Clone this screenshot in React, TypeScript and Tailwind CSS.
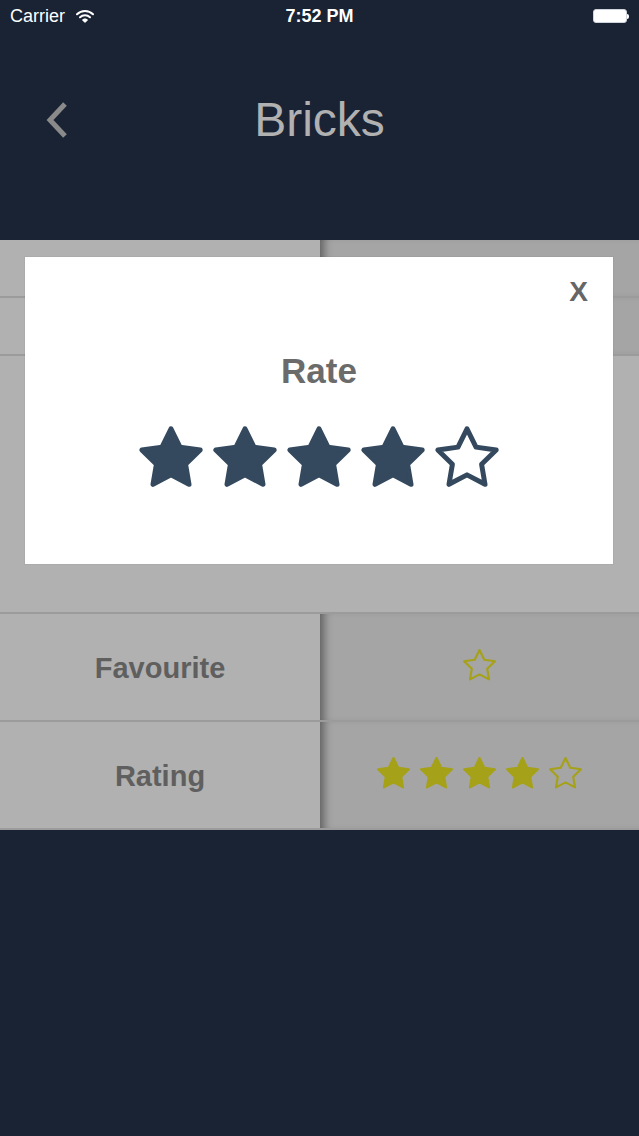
// Rating modal over a detail table, iOS style.

const STAR = "12,2 15.09,8.26 22,9.27 17,14.14 18.18,21.02 12,17.77 5.82,21.02 7,14.14 2,9.27 8.91,8.26";

function Star({
  size,
  color,
  filled,
  stroke,
}: {
  size: number;
  color: string;
  filled: boolean;
  stroke: number;
}) {
  return (
    <svg width={size} height={size} viewBox="0 0 24 24" className="shrink-0">
      <polygon
        points={STAR}
        fill={filled ? color : "none"}
        stroke={color}
        strokeWidth={stroke}
        strokeLinejoin="round"
      />
    </svg>
  );
}

function StatusBar() {
  return (
    <div className="relative flex h-8 items-center px-[10px] text-[18px] text-white">
      <span className="flex items-center gap-[11px]">
        Carrier
        <svg width="18" height="14" viewBox="0 0 18 14">
          <path d="M1 5.2a11.5 11.5 0 0 1 16 0" fill="none" stroke="white" strokeWidth="2" strokeLinecap="round" />
          <path d="M4 8.2a7.2 7.2 0 0 1 10 0" fill="none" stroke="white" strokeWidth="2" strokeLinecap="round" />
          <path d="M6.8 11a3 3 0 0 1 4.4 0L9 13.2z" fill="white" stroke="white" strokeWidth="1.2" strokeLinejoin="round" />
        </svg>
      </span>
      <span className="absolute left-1/2 -translate-x-1/2 font-semibold">7:52 PM</span>
      <span className="ml-auto flex items-center">
        <span className="h-[14px] w-[34px] rounded-[3px] border border-[#cfd3da] bg-white" />
        <span className="h-[5px] w-[2px] rounded-r-sm bg-white" />
      </span>
    </div>
  );
}

function Row({
  label,
  children,
}: {
  label: string;
  children?: React.ReactNode;
}) {
  return (
    <div className="flex h-[108px] border-b-2 border-[#9b9b9b]">
      <div className="flex w-[320px] items-center justify-center bg-[#b1b1b1] pt-[4px] text-[29px] font-bold text-[#5f5f5f]">
        {label}
      </div>
      <div className="flex flex-1 items-center justify-center gap-[6px] bg-[#a5a5a5] pb-[4px] shadow-[inset_10px_0_9px_-6px_rgba(0,0,0,0.42)]">
        {children}
      </div>
    </div>
  );
}

export default function App() {
  const yellow = "#a5a118";
  const navy = "#34495e";

  return (
    <div
      className="flex h-[1136px] w-[639px] flex-col bg-[#1a2334]"
      style={{ fontFamily: '"Liberation Sans", Arial, sans-serif' }}
    >
      <StatusBar />

      <header className="relative flex h-[176px] items-center justify-center">
        <svg
          width="26"
          height="40"
          viewBox="0 0 26 40"
          className="absolute left-[44px] top-[68px]"
        >
          <polyline points="21,4 6,20 21,36" fill="none" stroke="#8a8a8a" strokeWidth="5" strokeLinejoin="miter" />
        </svg>
        <h1 className="text-[48px] leading-none text-[#b1b1b1]">Bricks</h1>
      </header>
      <div className="h-8" />

      <div className="relative">
        <div className="flex h-[58px] border-b-2 border-[#9b9b9b]">
          <div className="w-[320px] bg-[#b1b1b1]" />
          <div className="flex-1 bg-[#a5a5a5] shadow-[inset_10px_0_9px_-6px_rgba(0,0,0,0.42)]" />
        </div>
        <div className="flex h-[58px] border-b-2 border-[#9b9b9b]">
          <div className="w-[320px] bg-[#b1b1b1]" />
          <div className="flex-1 bg-[#a5a5a5] shadow-[inset_10px_0_9px_-6px_rgba(0,0,0,0.42)]" />
        </div>
        <div className="h-[258px] border-b-2 border-[#9b9b9b] bg-[#b1b1b1]" />

        <Row label="Favourite">
          <Star size={37} color={yellow} filled={false} stroke={1.4} />
        </Row>
        <Row label="Rating">
          {[0, 1, 2, 3, 4].map((i) => (
            <Star key={i} size={37} color={yellow} filled={i < 4} stroke={1.4} />
          ))}
        </Row>

        {/* Rate modal */}
        <div className="absolute left-[25px] top-[17px] flex h-[307px] w-[588px] flex-col items-center bg-white shadow-[0_0_0_1px_rgba(0,0,0,0.03)]">
          <button
            type="button"
            className="absolute right-[25px] top-[21px] text-[28px] font-bold leading-none text-[#666666]"
          >
            X
          </button>
          <p className="mt-[96px] text-[35px] font-bold leading-none text-[#6b6b6b]">Rate</p>
          <div className="mt-[35px] flex gap-[4px]">
            {[0, 1, 2, 3, 4].map((i) => (
              <Star key={i} size={70} color={navy} filled={i < 4} stroke={1.7} />
            ))}
          </div>
        </div>
      </div>
    </div>
  );
}
